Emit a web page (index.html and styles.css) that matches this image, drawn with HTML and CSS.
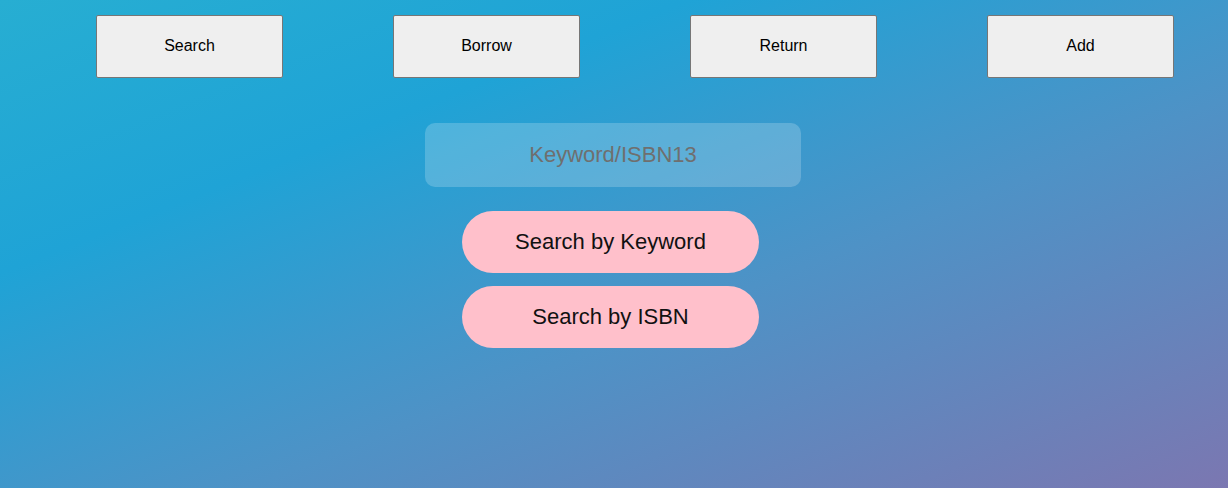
FILE: index.html
```html
<!DOCTYPE html>
<html lang="en">
<head>
<meta charset="utf-8">
<title>Library</title>
<link rel="stylesheet" href="styles.css">
</head>
<body>
<nav class="topbar">
  <button class="nav-btn">Search</button>
  <button class="nav-btn">Borrow</button>
  <button class="nav-btn">Return</button>
  <button class="nav-btn">Add</button>
</nav>
<main class="search-panel">
  <input class="search-input" type="text" placeholder="Keyword/ISBN13">
  <div class="actions">
    <button class="pill-btn">Search by Keyword</button>
    <button class="pill-btn">Search by ISBN</button>
  </div>
</main>
</body>
</html>
```
FILE: styles.css
```css
html, body {
  margin: 0;
  padding: 0;
  height: 100%;
}
body {
  font-family: "Liberation Sans", Arial, sans-serif;
  background: linear-gradient(to bottom right, #27aed2 0%, #1fa3d6 28%, #4e92c6 60%, #7b77b1 100%);
  min-height: 488px;
}
.topbar {
  display: flex;
  gap: 110px;
  padding: 15px 0 0 96px;
}
.nav-btn {
  width: 187px;
  height: 63px;
  padding: 0 0 2px;
  background: #efefef;
  border: 1px solid #767676;
  border-radius: 2px;
  font-family: "Liberation Sans", Arial, sans-serif;
  font-size: 16px;
  color: #000;
}
.search-panel {
  display: flex;
  flex-direction: column;
  align-items: center;
  padding-top: 45px;
}
.search-input {
  box-sizing: border-box;
  width: 376px;
  height: 64px;
  margin-right: 2px;
  border: none;
  border-radius: 10px;
  background: rgba(255, 255, 255, 0.2);
  font-family: "Liberation Sans", Arial, sans-serif;
  font-size: 22px;
  text-align: center;
  color: #333;
  outline: none;
}
.search-input::placeholder {
  color: #6f6f6f;
  opacity: 1;
}
.actions {
  display: flex;
  flex-direction: column;
  gap: 13px;
  margin-top: 24px;
  margin-right: 7px;
}
.pill-btn {
  width: 297px;
  height: 62px;
  border: none;
  border-radius: 31px;
  background: #ffc0cb;
  font-family: "Liberation Sans", Arial, sans-serif;
  font-size: 22px;
  color: #111;
  padding: 0;
}
```
